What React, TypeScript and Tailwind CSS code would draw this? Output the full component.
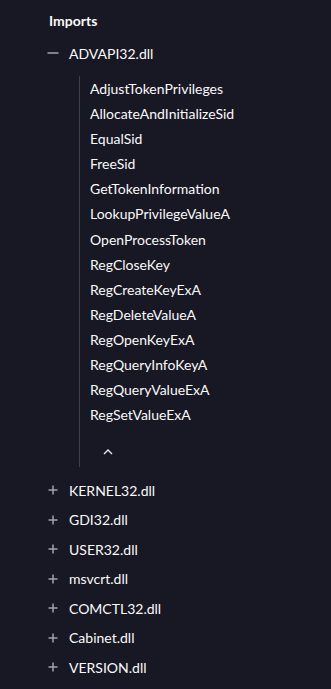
import React, { useState } from 'react';

const advapiFns = [
  'AdjustTokenPrivileges',
  'AllocateAndInitializeSid',
  'EqualSid',
  'FreeSid',
  'GetTokenInformation',
  'LookupPrivilegeValueA',
  'OpenProcessToken',
  'RegCloseKey',
  'RegCreateKeyExA',
  'RegDeleteValueA',
  'RegOpenKeyExA',
  'RegQueryInfoKeyA',
  'RegQueryValueExA',
  'RegSetValueExA',
];

const otherDlls = ['KERNEL32.dll', 'GDI32.dll', 'USER32.dll', 'msvcrt.dll', 'COMCTL32.dll', 'Cabinet.dll', 'VERSION.dll'];

const PlusIcon = () => (
  <svg width="12" height="12" viewBox="0 0 12 12" className="shrink-0">
    <path d="M6 1.5v9M1.5 6h9" stroke="#a3a3ab" strokeWidth="1.5" />
  </svg>
);

const MinusIcon = () => (
  <svg width="12" height="12" viewBox="0 0 12 12" className="shrink-0">
    <path d="M0.5 6h11" stroke="#a3a3ab" strokeWidth="1.5" />
  </svg>
);

export default function App() {
  const [open, setOpen] = useState(true);

  return (
    <div
      className="min-h-screen bg-[#181724] text-[#fafafa] text-[14px] pl-[47px] pt-[11px]"
      style={{ fontFamily: 'Lato, "Noto Sans", sans-serif' }}
    >
      <h3 className="pl-[2px] font-bold leading-[20px]">Imports</h3>

      {/* ADVAPI32 */}
      <button onClick={() => setOpen(!open)} className="flex items-center gap-[10px] h-[20px] mt-[12px]">
        <MinusIcon />
        <span>ADVAPI32.dll</span>
      </button>

      {open && (
        <div className="ml-[32px] mt-[13px] border-l border-[#3c3e52] pl-[10px] pt-[3px] w-fit pr-4">
          <ul className="flex flex-col gap-[5.1px]">
            {advapiFns.map((fn) => (
              <li key={fn} className="h-[20px] leading-[20px]">{fn}</li>
            ))}
          </ul>
          <div className="h-[42px] flex items-center pl-[13px] pt-[12px]">
            <svg width="10" height="6" viewBox="0 0 10 6">
              <path d="M1 5l4-4 4 4" stroke="#e8e8ee" strokeWidth="1.4" fill="none" />
            </svg>
          </div>
        </div>
      )}

      <ul className="flex flex-col gap-[9.5px] mt-[13px]">
        {otherDlls.map((d) => (
          <li key={d} className="flex items-center gap-[10px] h-[20px]">
            <PlusIcon />
            <span>{d}</span>
          </li>
        ))}
      </ul>
    </div>
  );
}
